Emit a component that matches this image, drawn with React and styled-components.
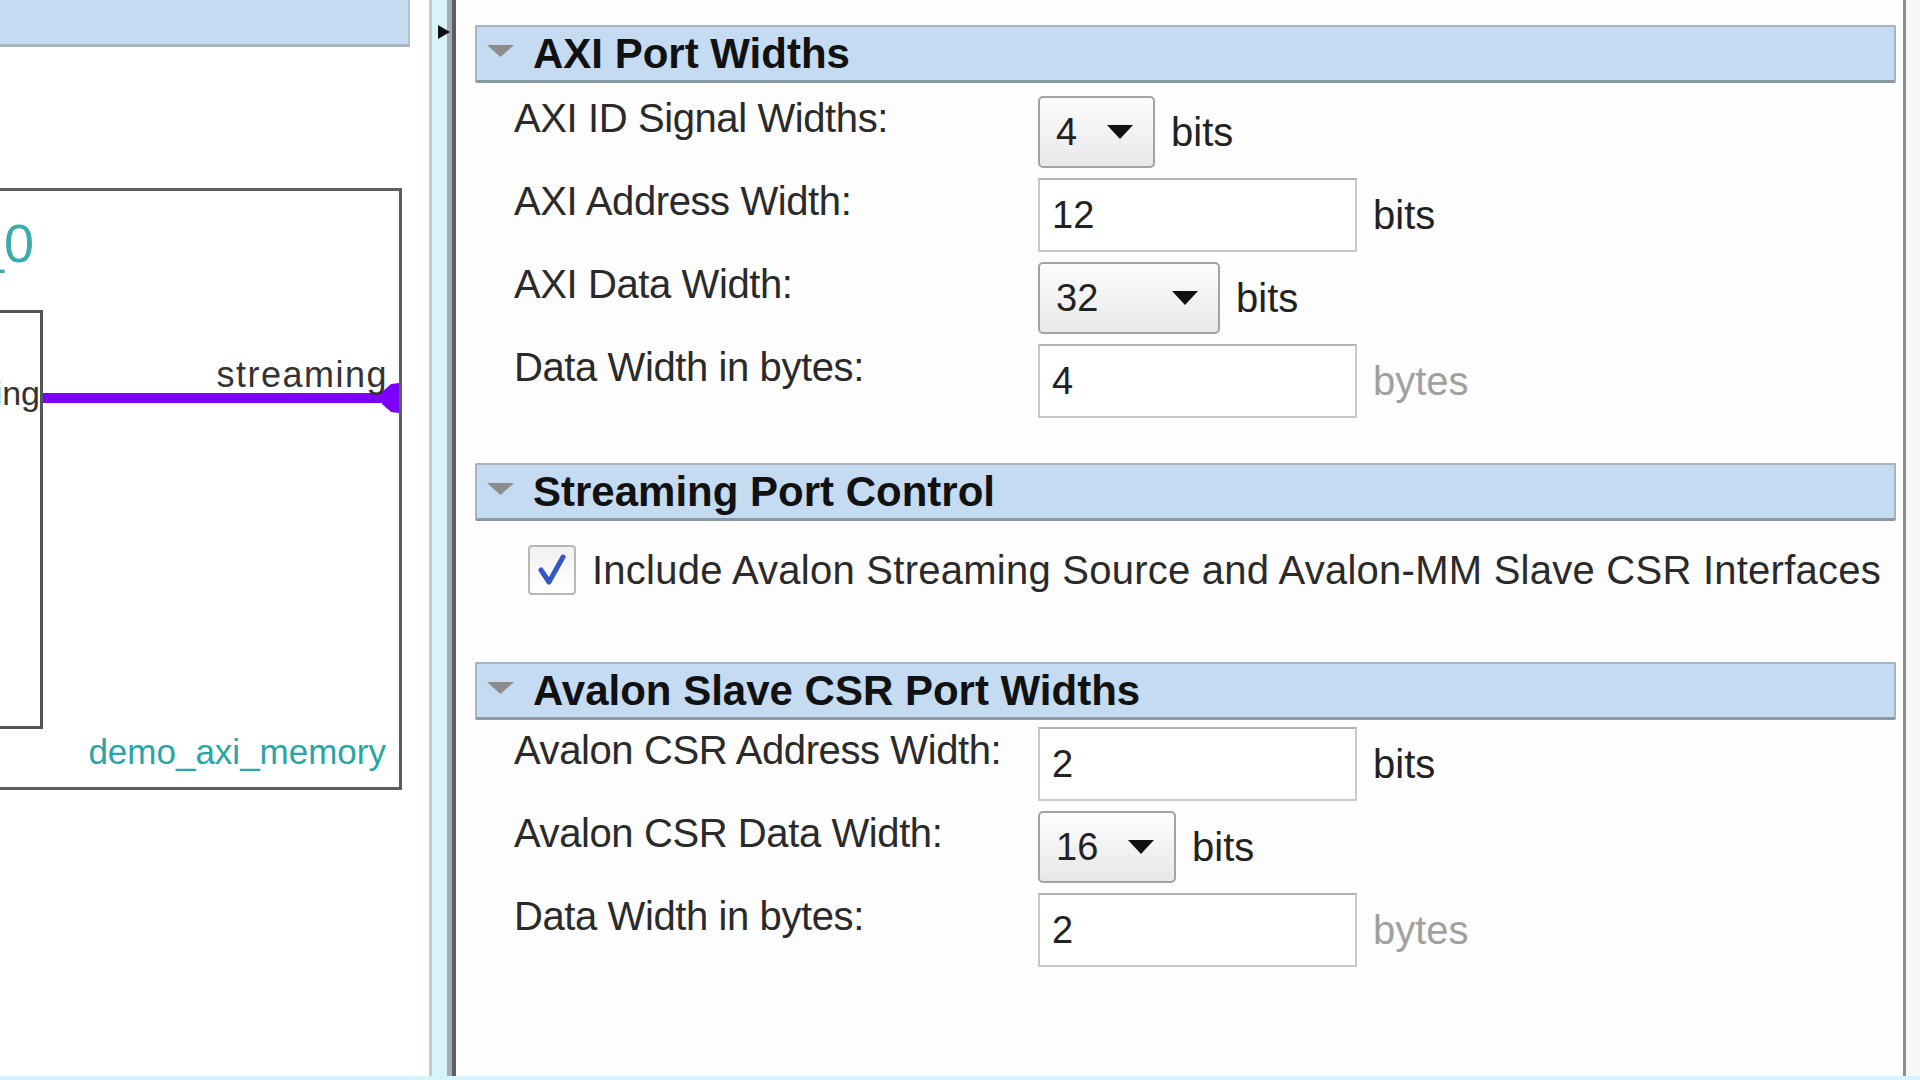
import React from 'react'
import styled, { createGlobalStyle } from 'styled-components'

const GlobalStyle = createGlobalStyle`
  html, body {
    margin: 0;
    padding: 0;
    background: #fff;
  }
  body {
    font-family: "Liberation Sans", Arial, sans-serif;
  }
  #root {
    width: 1920px;
    height: 1080px;
    overflow: hidden;
  }
`

const axiRows = [
  { label: 'AXI ID Signal Widths:', kind: 'select', value: '4', width: 117, unit: 'bits' },
  { label: 'AXI Address Width:', kind: 'text', value: '12', unit: 'bits' },
  { label: 'AXI Data Width:', kind: 'select', value: '32', width: 182, unit: 'bits' },
  { label: 'Data Width in bytes:', kind: 'text', value: '4', unit: 'bytes', muted: true },
]

const csrRows = [
  { label: 'Avalon CSR Address Width:', kind: 'text', value: '2', unit: 'bits' },
  { label: 'Avalon CSR Data Width:', kind: 'select', value: '16', width: 138, unit: 'bits' },
  { label: 'Data Width in bytes:', kind: 'text', value: '2', unit: 'bytes', muted: true },
]

const Collapse = () => (
  <svg width="27" height="12" viewBox="0 0 27 12">
    <polygon points="0,0 27,0 13.5,12" fill="#8c8c8c" />
  </svg>
)

const DropArrow = () => (
  <svg width="26" height="14" viewBox="0 0 26 14">
    <polygon points="0,0 26,0 13,14" fill="#111" />
  </svg>
)

const ParamRow = ({ row }) => (
  <Row>
    <Label>{row.label}</Label>
    <Field>
      {row.kind === 'select' ? (
        <SelectBox $w={row.width}>
          <span>{row.value}</span>
          <DropArrow />
        </SelectBox>
      ) : (
        <TextBox>{row.value}</TextBox>
      )}
      <Unit $muted={row.muted}>{row.unit}</Unit>
    </Field>
  </Row>
)

const App = () => {
  return (
    <Page>
      <GlobalStyle />
      <Main>
        <Canvas>
          <CanvasBar />
          <Node>
            <InstanceName>_0</InstanceName>
            <InnerBlock>
              <PortName $right={0} $top={63} $size={34}>streaming</PortName>
            </InnerBlock>
            <PortWire />
            <PortEnd width="17" height="30" viewBox="0 0 17 30">
              <polygon points="0,9 9,1 17,0 17,30 9,29 0,21" fill="#7d00ff" />
            </PortEnd>
            <PortName $right={11} $top={166} $size={36} $spaced>streaming</PortName>
            <ModuleName>demo_axi_memory</ModuleName>
          </Node>
        </Canvas>
        <Splitter>
          <SplitArrow />
        </Splitter>
        <Panel>
          <PanelBody>
            <Section>
              <SectionHeader>
                <Collapse />
                AXI Port Widths
              </SectionHeader>
              <SectionBody $top={12}>
                {axiRows.map((r) => <ParamRow key={r.label} row={r} />)}
              </SectionBody>
            </Section>
            <Section $gap={45}>
              <SectionHeader>
                <Collapse />
                Streaming Port Control
              </SectionHeader>
              <SectionBody $top={24}>
                <CheckRow>
                  <Checkbox>
                    <svg width="36" height="36" viewBox="0 0 36 36">
                      <path d="M7 18 L15 30 L29 5" fill="none" stroke="#3557c2" strokeWidth="5" strokeLinecap="round" strokeLinejoin="round" />
                    </svg>
                  </Checkbox>
                  Include Avalon Streaming Source and Avalon-MM Slave CSR Interfaces
                </CheckRow>
              </SectionBody>
            </Section>
            <Section $gap={67}>
              <SectionHeader>
                <Collapse />
                Avalon Slave CSR Port Widths
              </SectionHeader>
              <SectionBody $top={7}>
                {csrRows.map((r) => <ParamRow key={r.label} row={r} />)}
              </SectionBody>
            </Section>
          </PanelBody>
          <PanelEdge />
        </Panel>
      </Main>
      <BottomStrip />
    </Page>
  )
}

const Page = styled.div`
  width: 1920px;
  height: 1080px;
  display: flex;
  flex-direction: column;
  overflow: hidden;
  background: #fff;
`

const Main = styled.div`
  flex: 1;
  display: flex;
  min-height: 0;
`

const Canvas = styled.div`
  width: 429px;
  flex: none;
  position: relative;
  overflow: hidden;
  background: #fff;
`

const CanvasBar = styled.div`
  width: 410px;
  height: 47px;
  box-sizing: border-box;
  background: #c6dcf2;
  border-bottom: 3px solid #a9b4bf;
  border-right: 2px solid #b6c0ca;
`

const Node = styled.div`
  position: absolute;
  left: -20px;
  top: 188px;
  width: 422px;
  height: 602px;
  box-sizing: border-box;
  border: 3px solid #5d5d5d;
  background: #fff;
`

const InstanceName = styled.span`
  position: absolute;
  left: -9px;
  top: 25px;
  font-size: 54px;
  line-height: 1;
  color: #3cabab;
`

const InnerBlock = styled.div`
  position: absolute;
  left: -10px;
  top: 119px;
  width: 70px;
  height: 419px;
  box-sizing: border-box;
  border: 3px solid #555;
`

const PortName = styled.span`
  position: absolute;
  right: ${(p) => p.$right}px;
  top: ${(p) => p.$top}px;
  font-size: ${(p) => p.$size}px;
  line-height: 1;
  color: #333;
  white-space: nowrap;
  letter-spacing: ${(p) => (p.$spaced ? '1.5px' : '0')};
`

const PortWire = styled.div`
  position: absolute;
  left: 60px;
  top: 202px;
  width: 350px;
  height: 10px;
  background: #7d00ff;
`

const PortEnd = styled.svg`
  position: absolute;
  left: 399px;
  top: 192px;
`

const ModuleName = styled.span`
  position: absolute;
  right: 13px;
  top: 543px;
  font-size: 35px;
  line-height: 1;
  color: #2aa5a5;
  white-space: nowrap;
`

const Splitter = styled.div`
  width: 27px;
  flex: none;
  position: relative;
  background: linear-gradient(
    to right,
    #c3cbce 0 3px,
    #d7f4fc 3px 18px,
    #a3adb1 18px 23px,
    #5e5e5e 23px 27px
  );
`

const SplitArrow = styled.div`
  position: absolute;
  left: 9px;
  top: 25px;
  width: 0;
  height: 0;
  border-left: 12px solid #111;
  border-top: 7px solid transparent;
  border-bottom: 7px solid transparent;
`

const Panel = styled.div`
  flex: 1;
  display: flex;
  background: #fdfdfd;
`

const PanelBody = styled.div`
  flex: 1;
  padding: 25px 7px 0 19px;
  display: flex;
  flex-direction: column;
`

const PanelEdge = styled.div`
  width: 14px;
  flex: none;
  border-left: 3px solid #8d8d8d;
  background: #f7f7f7;
`

const Section = styled.section`
  margin-top: ${(p) => p.$gap || 0}px;
`

const SectionHeader = styled.div`
  height: 58px;
  box-sizing: border-box;
  display: flex;
  align-items: center;
  gap: 19px;
  padding-left: 10px;
  background: #c4dbf2;
  border: 2px solid #a9b3bd;
  border-bottom: 3px solid #8c98a4;
  border-radius: 2px;
  font-size: 42px;
  font-weight: 700;
  color: #111;
  white-space: nowrap;

  svg {
    margin-top: -5px;
  }
`

const SectionBody = styled.div`
  padding-top: ${(p) => p.$top}px;
  display: flex;
  flex-direction: column;
  gap: 9px;
`

const Row = styled.div`
  display: flex;
  align-items: flex-start;
  height: 74px;
`

const Label = styled.div`
  width: 563px;
  flex: none;
  box-sizing: border-box;
  padding-left: 39px;
  font-size: 40px;
  line-height: 46px;
  letter-spacing: -0.4px;
  color: #2a2a2a;
  white-space: nowrap;
`

const Field = styled.div`
  display: flex;
  align-items: center;
  gap: 16px;
  height: 74px;
`

const SelectBox = styled.div`
  width: ${(p) => p.$w}px;
  height: 72px;
  box-sizing: border-box;
  display: flex;
  align-items: center;
  justify-content: space-between;
  padding: 0 20px 0 16px;
  border: 2px solid #a3a3a3;
  border-radius: 5px;
  background: linear-gradient(#fdfdfd, #e8e8e8);
  font-size: 38px;
  color: #222;
`

const TextBox = styled.div`
  width: 319px;
  height: 74px;
  box-sizing: border-box;
  display: flex;
  align-items: center;
  padding-left: 12px;
  border: 2px solid #c8c8c8;
  border-top-color: #b2b2b2;
  background: #fff;
  font-size: 38px;
  color: #222;
`

const Unit = styled.span`
  font-size: 40px;
  color: ${(p) => (p.$muted ? '#a0a0a0' : '#222')};
`

const CheckRow = styled.label`
  display: flex;
  align-items: center;
  gap: 16px;
  padding-left: 53px;
  font-size: 40px;
  letter-spacing: 0.25px;
  color: #2a2a2a;
  white-space: nowrap;
`

const Checkbox = styled.span`
  width: 48px;
  height: 50px;
  flex: none;
  box-sizing: border-box;
  display: flex;
  align-items: center;
  justify-content: center;
  border: 2px solid #b8b8b8;
  border-radius: 4px;
  background: linear-gradient(#f0f0f0, #fff);
`

const BottomStrip = styled.div`
  height: 4px;
  flex: none;
  background: #d6f3fb;
`

export default App
